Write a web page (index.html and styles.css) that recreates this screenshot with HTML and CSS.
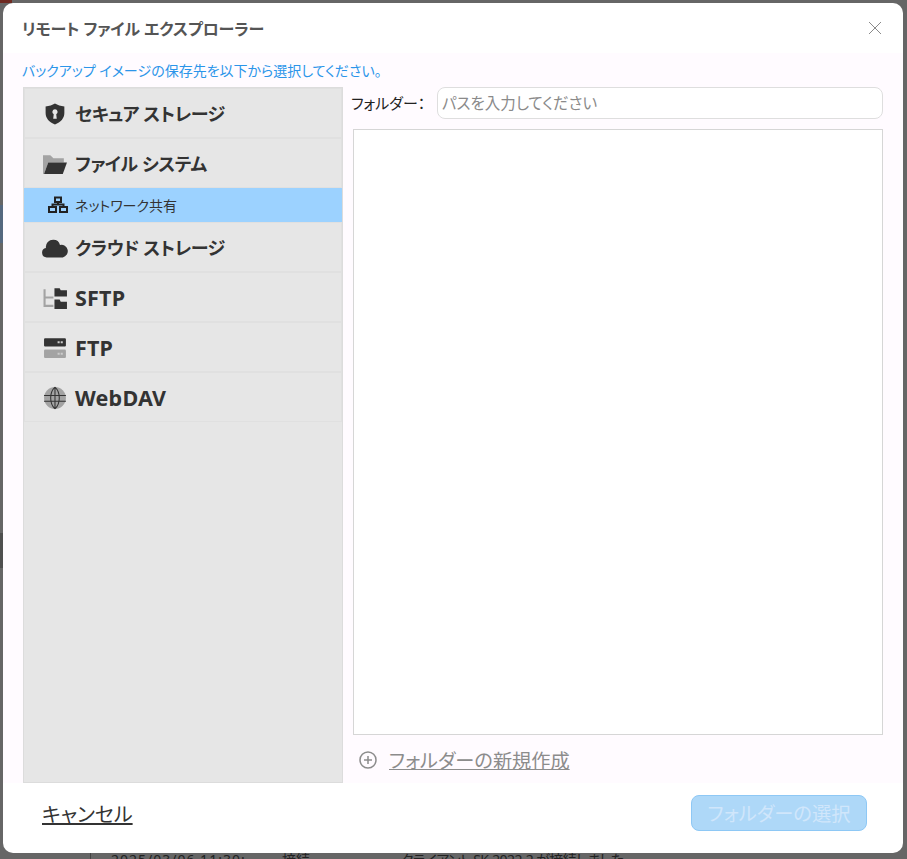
FILE: index.html
```html
<!DOCTYPE html>
<html lang="ja">
<head>
<meta charset="utf-8">
<title>リモート ファイル エクスプローラー</title>
<link rel="stylesheet" href="styles.css">
</head>
<body>
<div class="backdrop">
  <div class="bg-red"></div>
  <div class="bg-blue"></div>
  <div class="bg-dark"></div>
  <div class="bg-rule"></div>
  <div class="bg-log">
    <span class="log-date">2025/03/06 11:30:</span>
    <span class="log-type">接続</span>
    <span class="log-msg">クライアント SK-2022-2 が接続しました</span>
  </div>
</div>
<main class="modal">
  <header class="modal-head">
    <h1 class="modal-title">リモート ファイル エクスプローラー</h1>
    <svg class="close" viewBox="0 0 14 14"><path d="M1 1l12 12M13 1L1 13" fill="none" stroke="#8a8a8a" stroke-width="1"/></svg>
  </header>
  <section class="modal-body">
    <p class="hint">バックアップ イメージの保存先を以下から選択してください。</p>
    <div class="columns">
      <nav class="side">
        <div class="item">
          <svg class="ico" viewBox="0 0 24 24"><path fill="#333" fill-rule="evenodd" d="M11.500 2.500c2.500 1.500 5.500 2.500 9 2.800v6.200c0 5-3.500 9-9 11-5.500-2-9-6-9-11V5.300c3.500-.3 6.500-1.300 9-2.800zM11.500 8a2.500 2.500 0 0 0-1.200 4.700L9.800 17h3.400l-.5-4.300A2.500 2.500 0 0 0 11.500 8z"/></svg>
          <span>セキュア ストレージ</span>
        </div>
        <div class="item">
          <svg class="ico" viewBox="0 0 24 24"><path fill="#a3a3a3" d="M0 4h7l3 3h10v4H5L1 22H0z"/><path fill="#333" d="M5 11h18l-4 11H1z"/></svg>
          <span>ファイル システム</span>
        </div>
        <div class="item sub">
          <svg class="ico-s" viewBox="0 0 20 17"><path fill="none" stroke="#222" stroke-width="2" d="M7 1.500h6v4.500H7zM1 11h7v5H1zM12 11h7v5h-7zM10 6v2.500M4.500 11V8.500h11V11"/></svg>
          <span>ネットワーク共有</span>
        </div>
        <div class="item">
          <svg class="ico" viewBox="0 0 24 24"><path fill="#333" d="M3.500 21.500A4.600 4.600 0 0 1 2.800 12.400 7 7 0 0 1 10 4.500 6.500 6.500 0 0 1 16.300 9.500 6 6 0 0 1 19 21.500z"/></svg>
          <span>クラウド ストレージ</span>
        </div>
        <div class="item">
          <svg class="ico" viewBox="0 0 24 24"><path fill="none" stroke="#a3a3a3" stroke-width="2" d="M1.500 4v16H10M1.500 12H10"/><path fill="#333" d="M11 3h5l1 2h6v6H11zM11 14h5l1 2h6v7H11z"/></svg>
          <span class="latin">SFTP</span>
        </div>
        <div class="item">
          <svg class="ico" viewBox="0 0 24 24"><rect x="1" y="3" width="21" height="8" rx="1" fill="#333"/><rect x="1" y="14" width="21" height="8" rx="1" fill="#a3a3a3"/><path fill="#ccc" d="M14 6h2v2h-2zM17 6h2v2h-2zM14 17h2v2h-2zM17 17h2v2h-2z"/></svg>
          <span class="latin">FTP</span>
        </div>
        <div class="item">
          <svg class="ico" viewBox="0 0 24 24"><circle cx="11.500" cy="12.500" r="10.500" fill="#a3a3a3"/><path fill="none" stroke="#333" stroke-width="1" d="M11.500 2c-5.500 5-5.500 16 0 21M11.500 2c5.500 5 5.500 16 0 21M1 10h21M1 15.500h21M11.500 2v21"/></svg>
          <span class="latin">WebDAV</span>
        </div>
      </nav>
      <div class="pane">
        <div class="path-row">
          <label class="path-label" for="path">フォルダー：</label>
          <input class="path-input" id="path" placeholder="パスを入力してください">
        </div>
        <div class="tree"></div>
        <div class="new-row">
          <svg class="plus" viewBox="0 0 18 18"><circle cx="9" cy="9" r="8" fill="none" stroke="#8c8c8c" stroke-width="1.500"/><path d="M9 5v8M5 9h8" stroke="#8c8c8c" stroke-width="1.500"/></svg>
          <a class="new-link" href="#">フォルダーの新規作成</a>
        </div>
      </div>
    </div>
  </section>
  <footer class="modal-foot">
    <a class="cancel" href="#">キャンセル</a>
    <button class="primary" disabled>フォルダーの選択</button>
  </footer>
</main>
</body>
</html>
```

FILE: styles.css
```css
* { box-sizing: border-box; }
html, body { margin: 0; height: 100%; }
body {
  width: 907px;
  height: 859px;
  overflow: hidden;
  position: relative;
  background: #666;
  padding: 3px 4px 6px 3px;
  font-family: "Noto Sans", "Noto Sans CJK JP", sans-serif;
  font-feature-settings: "palt";
  color: #333;
}
.backdrop { position: absolute; inset: 0; }
.bg-red { position: absolute; left: 0; top: 0; width: 12px; height: 3px; background: #6e2a22; }
.bg-blue { position: absolute; left: 0; top: 205px; width: 3px; height: 38px; background: #55687f; }
.bg-dark { position: absolute; left: 0; top: 533px; width: 3px; height: 35px; background: #4f4f4f; }
.bg-rule { position: absolute; left: 90px; top: 853px; width: 1px; height: 6px; background: #444; }
.bg-log {
  position: absolute;
  left: 111px;
  top: 851px;
  display: flex;
  font-size: 14px;
  line-height: 18px;
  color: #222;
  white-space: nowrap;
}
.log-date { width: 171px; letter-spacing: 1px; }
.log-type { width: 119px; }
.log-msg { letter-spacing: -.6px; }
.modal {
  position: relative;
  height: 850px;
  background: #fff;
  border-radius: 10px;
  display: flex;
  flex-direction: column;
  overflow: hidden;
}
.modal-head {
  height: 50px;
  flex: none;
  display: flex;
  align-items: center;
  justify-content: space-between;
  padding: 0 21px 1px 19px;
}
.modal-title { margin: 0; font-size: 16px; font-weight: 700; color: #555; letter-spacing: -.12px; }
.close { width: 14px; height: 14px; }
.modal-body {
  height: 730px;
  flex: none;
  background: #fffbff;
  padding: 9px 20px 0 20px;
  display: flex;
  flex-direction: column;
}
.hint { margin: 0 0 0 -1px; height: 25px; font-size: 14px; line-height: 18px; color: #2b95e9; }
.columns { flex: 1; display: flex; min-height: 0; }
.side {
  width: 320px;
  flex: none;
  background: #e6e6e6;
  border: 1px solid #dcdcdc;
  display: flex;
  flex-direction: column;
}
.item {
  height: 50px;
  flex: none;
  display: flex;
  align-items: center;
  gap: 7px;
  padding: 0 0 0 18px;
  border: 1px solid #e0e0e0;
  font-size: 18px;
  letter-spacing: -.38px;
  font-weight: 700;
  color: #333;
}
.ico { width: 25px; height: 25px; flex: none; overflow: visible; }
.latin { font-size: 21.5px; letter-spacing: .2px; }
.sub {
  height: 34px;
  background: #9cd2ff;
  border: 0;
  font-size: 14px;
  letter-spacing: 0;
  font-weight: 400;
  padding: 0 0 1px 24px;
  gap: 7px;
  color: #333;
}
.ico-s { width: 20px; height: 17px; flex: none; }
.pane { flex: 1; min-width: 0; display: flex; flex-direction: column; padding-left: 10px; }
.path-row { height: 32px; flex: none; display: flex; align-items: center; }
.path-label { width: 86px; margin-left: -2px; padding-bottom: 1px; flex: none; font-size: 15px; color: #222; }
.path-input {
  flex: 1;
  min-width: 0;
  height: 32px;
  border: 1px solid #dedede;
  border-radius: 8px;
  background: #fff;
  padding: 0 4px;
  font: inherit;
  font-size: 15.5px;
  outline: 0;
}
.path-input::placeholder { color: #8a8a8a; opacity: 1; }
.tree { height: 606px; flex: none; margin-top: 10px; background: #fff; border: 1px solid #d6d6d6; }
.new-row { flex: 1; display: flex; align-items: center; gap: 12px; padding-left: 6px; padding-top: 1px; }
.plus { width: 18px; height: 18px; flex: none; }
.new-link { font-size: 19.2px; color: #8c8c8c; text-decoration: underline; }
.modal-foot {
  flex: 1;
  display: flex;
  align-items: center;
  justify-content: space-between;
  padding: 0 36px 10px 39px;
}
.cancel { font-size: 20px; color: #333; text-decoration: underline; }
.primary {
  width: 176px;
  height: 36px;
  padding: 0;
  border: 1px solid #8ec8f5;
  border-radius: 8px;
  background: #aed8f8;
  color: #d0e6fb;
  font: inherit;
  font-size: 19.3px;
}
```
